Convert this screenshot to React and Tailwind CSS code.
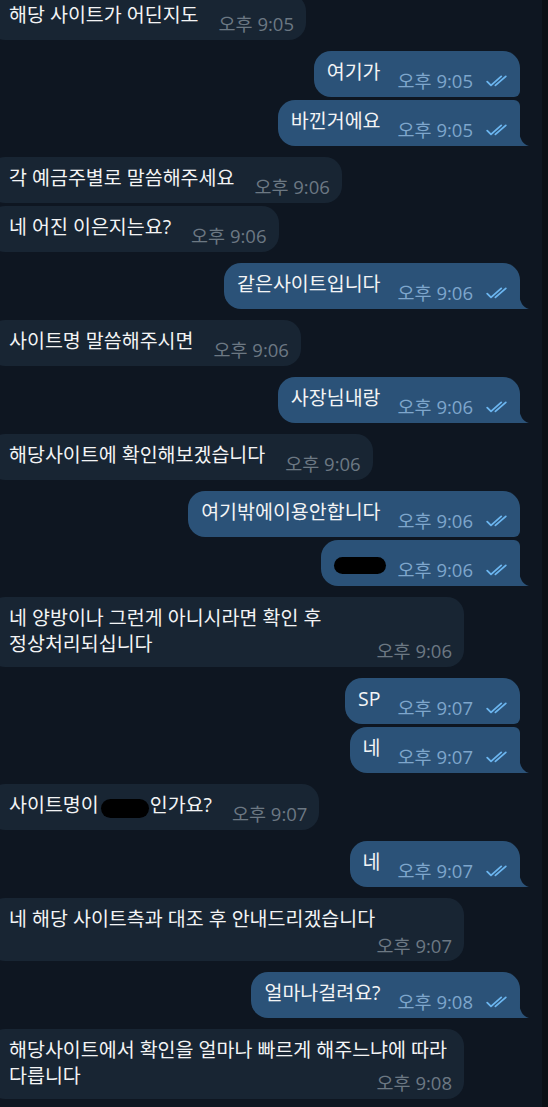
import React from "react";

const messages = [
  { side: "in", text: "해당 사이트가 어딘지도", time: "오후 9:05" },
  { side: "out", text: "여기가", time: "오후 9:05" },
  { side: "out", text: "바낀거에요", time: "오후 9:05" },
  { side: "in", text: "각 예금주별로 말씀해주세요", time: "오후 9:06" },
  { side: "in", text: "네 어진 이은지는요?", time: "오후 9:06" },
  { side: "out", text: "같은사이트입니다", time: "오후 9:06" },
  { side: "in", text: "사이트명 말씀해주시면", time: "오후 9:06" },
  { side: "out", text: "사장님내랑", time: "오후 9:06" },
  { side: "in", text: "해당사이트에 확인해보겠습니다", time: "오후 9:06" },
  { side: "out", text: "여기밖에이용안합니다", time: "오후 9:06" },
  { side: "out", hidden: true, time: "오후 9:06" },
  {
    side: "in",
    lines: ["네 양방이나 그런게 아니시라면 확인 후", "정상처리되십니다"],
    time: "오후 9:06",
  },
  { side: "out", text: "SP", time: "오후 9:07" },
  { side: "out", text: "네", time: "오후 9:07" },
  { side: "in", blot: true, time: "오후 9:07" },
  { side: "out", text: "네", time: "오후 9:07" },
  {
    side: "in",
    lines: ["네 해당 사이트측과 대조 후 안내드리겠습니다"],
    below: true,
    time: "오후 9:07",
  },
  { side: "out", text: "얼마나걸려요?", time: "오후 9:08" },
  {
    side: "in",
    lines: ["해당사이트에서 확인을 얼마나 빠르게 해주느냐에 따라", "다릅니다"],
    time: "오후 9:08",
  },
];

function Checks() {
  return (
    <svg width="24" height="12" viewBox="0 0 24 12" fill="none" className="ml-[13px]">
      <path
        d="M1.2 6.6 L5 10.4 L15.2 1.4"
        stroke="#6cb6f0"
        strokeWidth="1.8"
        strokeLinecap="round"
        strokeLinejoin="round"
      />
      <path
        d="M9.4 10.4 L19.8 1.4"
        stroke="#6cb6f0"
        strokeWidth="1.8"
        strokeLinecap="round"
      />
    </svg>
  );
}

function Tail() {
  return (
    <svg
      width="10"
      height="17"
      viewBox="0 0 10 17"
      className="absolute right-[-9px] bottom-0"
    >
      <path d="M0 0 Q0.5 14.5 10 17 L0 17 Z" fill="#2b5278" />
    </svg>
  );
}

function Time({ m }) {
  const out = m.side === "out";
  return (
    <div
      className={
        "flex items-center shrink-0 whitespace-nowrap leading-[20px] text-[18.5px] " +
        (out ? "text-[#7ea6cc]" : "text-[#6c7883]")
      }
    >
      <span>{m.time}</span>
      {out && <Checks />}
    </div>
  );
}

function Body({ m }) {
  if (m.hidden) {
    return (
      <div className="h-[26px] flex items-start">
        <span className="mt-[9px] mr-[-5px] inline-block w-[52px] h-[17px] rounded-full bg-black" />
      </div>
    );
  }
  if (m.blot) {
    return (
      <div className="leading-[26px] whitespace-nowrap flex items-center">
        <span>사이트명이</span>
        <span className="ml-[2px] mr-[1px] mt-[6px] inline-block w-[48px] h-[19px] rounded-[10px] bg-black" />
        <span>인가요?</span>
      </div>
    );
  }
  return <div className="leading-[26px] whitespace-nowrap">{m.text}</div>;
}

function Bubble({ m, prev, next }) {
  const out = m.side === "out";
  const first = !prev || prev.side !== m.side;
  const last = !next || next.side !== m.side;

  let shape = "";
  if (out) {
    shape =
      "self-end mr-[22px] bg-[#2b5278] rounded-l-[17px] pl-[13px] pr-[10px] " +
      (first ? "rounded-tr-[17px] " : "rounded-tr-[6px] ") +
      (last ? "rounded-br-none" : "rounded-br-[6px]");
  } else {
    shape =
      "self-start -ml-[12px] bg-[#182533] rounded-[17px] pl-[21px] pr-[12px]";
  }

  const gap = !prev ? "-mt-[6px]" : first ? "mt-[11px]" : "mt-[3px]";

  if (m.lines) {
    return (
      <div
        className={
          "relative w-[476px] flex flex-col pt-[8px] " +
          shape +
          " " +
          gap +
          (m.below ? " pb-[5px]" : " pb-[6px]")
        }
      >
        <div className="leading-[26px] whitespace-nowrap">
          {m.lines.map((l, i) => (
            <div key={i}>{l}</div>
          ))}
        </div>
        <div className={"self-end " + (m.below ? "mt-[4px]" : "-mt-[16px]")}>
          <Time m={m} />
        </div>
      </div>
    );
  }

  return (
    <div className={"relative flex items-start pt-[8px] pb-[6px] " + shape + " " + gap}>
      <Body m={m} />
      <div className={"mt-[12px] " + (out ? "ml-[17px]" : "ml-[20px]")}>
        <Time m={m} />
      </div>
      {out && last && <Tail />}
    </div>
  );
}

export default function App() {
  return (
    <div
      className="h-[1107px] w-[548px] overflow-hidden flex bg-[#0e1621] text-[#f3f4f5] text-[19.5px]"
      style={{ fontFamily: '"Open Sans", "Noto Sans CJK KR", sans-serif' }}
    >
      <div className="flex-1 flex flex-col">
        {messages.map((m, i) => (
          <Bubble key={i} m={m} prev={messages[i - 1]} next={messages[i + 1]} />
        ))}
      </div>
      <div className="w-[6px] bg-[#0a0f15]" />
    </div>
  );
}
